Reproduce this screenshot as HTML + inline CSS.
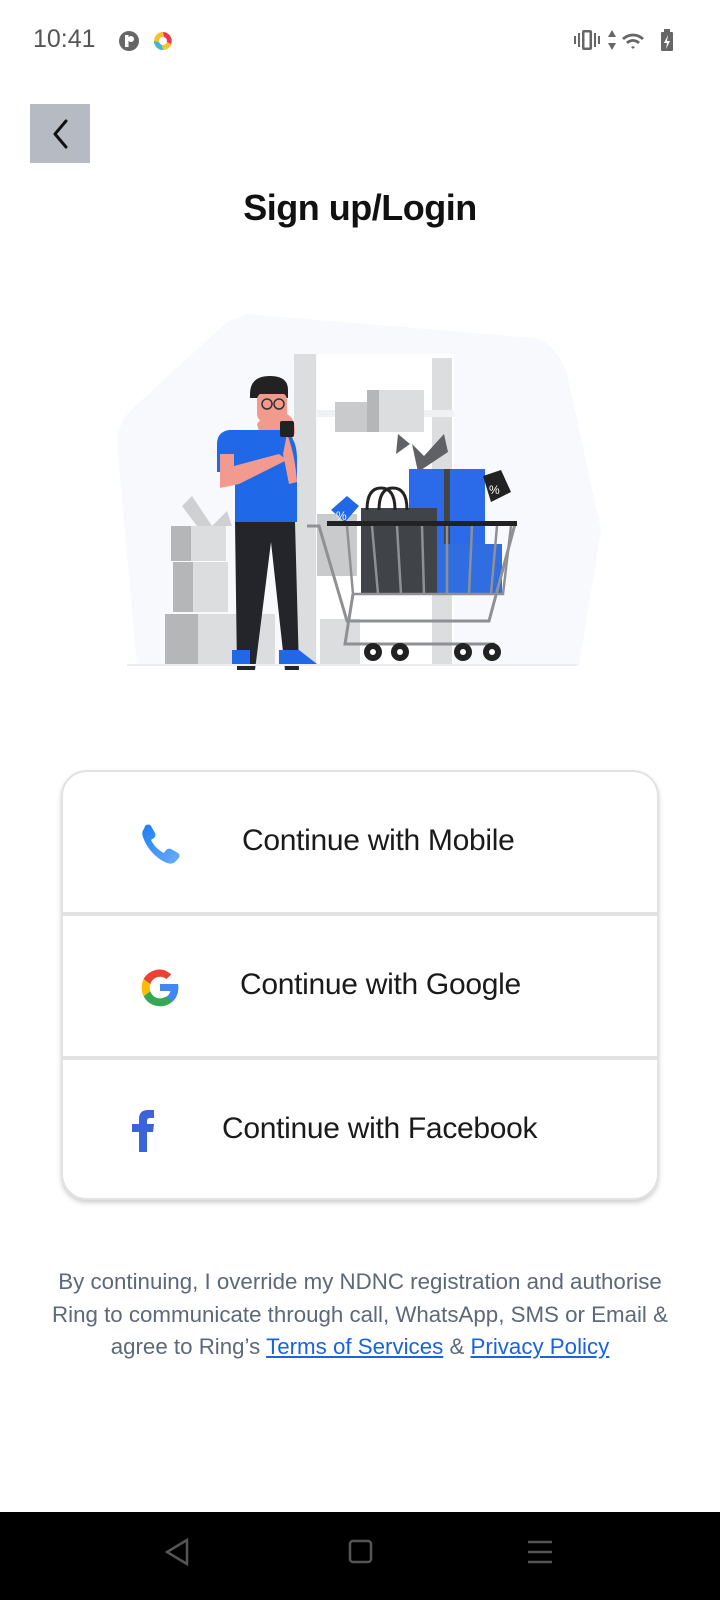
<!DOCTYPE html>
<html><head><meta charset="utf-8"><style>
*{margin:0;padding:0;box-sizing:border-box}
body{width:720px;height:1600px;background:#fff;position:relative;overflow:hidden;font-family:"Liberation Sans",sans-serif;color:#111}
.abs{position:absolute}
.time{left:33px;top:25px;font-size:25px;color:#555}
.back{left:30px;top:104px;width:60px;height:59px;background:#b6bac3}
.title{left:0;width:720px;top:187px;text-align:center;font-size:36px;font-weight:bold;letter-spacing:-0.5px}
.card{left:61px;top:770px;width:598px;height:430px;border:2px solid #e2e2e2;border-radius:26px;box-shadow:0 3px 5px rgba(0,0,0,.18);background:#fff;overflow:hidden}
.row{position:absolute;left:0;width:100%;height:142px}
.row span{position:absolute;font-size:30px;color:#1a1a1a;letter-spacing:-0.3px}
.div{position:absolute;left:0;width:100%;height:4px;background:#e2e2e2}
.disc{left:0;width:720px;top:1266px;text-align:center;font-size:22.3px;line-height:32.5px;color:#5d6878;white-space:nowrap}
.disc a{color:#1a63e0;text-decoration:underline}
.nav{left:0;top:1512px;width:720px;height:88px;background:#000}
</style></head><body>
<div class="abs time">10:41</div>
<svg class="abs" style="left:118px;top:30px" width="60" height="24" viewBox="0 0 60 24">
<circle cx="11" cy="11" r="10" fill="#666"/><rect x="7" y="5" width="3.5" height="12" fill="#fff"/><circle cx="13" cy="9" r="3" fill="#fff"/>
<circle cx="45" cy="11" r="9" fill="#f2c12e"/><path d="M45 2a9 9 0 0 1 8 12l-6-3z" fill="#e8365d"/><path d="M36 11a9 9 0 0 0 9 9l-2-7z" fill="#3ab8d8"/><circle cx="45" cy="11" r="4" fill="#fff"/>
</svg>
<svg class="abs" style="left:572px;top:26px" width="120" height="30" viewBox="0 0 120 30">
<g fill="#666"><rect x="2" y="10" width="2" height="8"/><rect x="6" y="7" width="2" height="14"/><rect x="10" y="4" width="10" height="20" rx="2"/><rect x="12.5" y="6.5" width="5" height="15" fill="#fff"/><rect x="22" y="7" width="2" height="14"/><rect x="26" y="10" width="2" height="8"/>
<path d="M40 4l-4 7h8zM40 24l-4-7h8z"/>
<path d="M50 12a16 16 0 0 1 22 0l-2 2a13 13 0 0 0-18 0zM54 16a10 10 0 0 1 14 0l-2 2a7 7 0 0 0-10 0zM59 21a3 3 0 0 1 4 0l-2 2z"/>
<rect x="89" y="6" width="12" height="19" rx="1"/><rect x="92" y="3" width="6" height="3"/></g>
<path d="M96 9l-4 8h3l-1 6 4-8h-3z" fill="#fff"/>
</svg>
<div class="abs back"><svg width="60" height="59"><path d="M36 17L25 30l11 13" stroke="#111" stroke-width="3" fill="none" stroke-linecap="round" stroke-linejoin="round"/></svg></div>
<div class="abs title">Sign up/Login</div>

<svg class="abs" style="left:117px;top:314px" width="490" height="366" viewBox="0 0 490 366">
<path d="M130 0L418 24Q440 30 450 60L484 216L462 352L20 352L0 130Q0 110 15 95L110 8Z" fill="#f7f9fd"/>
<rect x="177" y="40" width="22" height="312" fill="#dcdddf"/>
<rect x="200" y="40" width="137" height="312" fill="#fff"/>
<rect x="315" y="44" width="20" height="308" fill="#dcdddf"/>
<rect x="200" y="96" width="137" height="7" fill="#f0f1f3"/>
<rect x="218" y="88" width="40" height="30" fill="#c9cacc"/>
<rect x="250" y="76" width="57" height="42" fill="#dcdddf"/><rect x="250" y="76" width="12" height="42" fill="#b5b6b8"/>
<rect x="54" y="212" width="55" height="35" fill="#dcdddf"/><rect x="54" y="212" width="20" height="35" fill="#b5b6b8"/>
<rect x="56" y="248" width="55" height="50" fill="#dcdddf"/><rect x="56" y="248" width="20" height="50" fill="#b5b6b8"/>
<rect x="48" y="300" width="110" height="52" fill="#dcdddf"/><rect x="48" y="300" width="33" height="52" fill="#b5b6b8"/>
<path d="M80 212l-15-20 10-10 20 30zM95 212l15-15 5 15z" fill="#cfd0d2"/>
<rect x="200" y="200" width="40" height="62" fill="#c9cacc"/>
<rect x="203" y="305" width="40" height="45" fill="#dcdddf"/>
<path d="M140 110q10-14 30-10q8 4 8 18l-4 14h-28z" fill="#f39a8e"/>
<path d="M133 80q0-18 20-18q18 0 18 14v8h-38z" fill="#222"/>
<rect x="140" y="78" width="30" height="30" rx="8" fill="#f39a8e"/>
<path d="M142 70q12-8 28 2v8h-28z" fill="#222"/>
<circle cx="150" cy="90" r="5" fill="none" stroke="#333" stroke-width="1.5"/><circle cx="162" cy="90" r="5" fill="none" stroke="#333" stroke-width="1.5"/>
<path d="M100 130q0-12 12-14h50q18 2 18 30v62h-62v-50h-18z" fill="#1f68e8"/>
<path d="M103 140l14 0l0 12l45-12l8 6l-48 24l-19 4z" fill="#f39a8e"/>
<path d="M170 120q8 20 10 48l-8 2l-6-30z" fill="#f39a8e"/>
<rect x="163" y="107" width="14" height="16" rx="2" fill="#222"/>
<path d="M118 208h60l4 148h-14l-14-128l-16 128h-18z" fill="#23252a"/>
<path d="M115 336h18v14h-18zM162 336h20l18 14h-38z" fill="#1f68e8"/>
<path d="M295 130l12 12 20-22 4 18-30 20zM293 130l-12-10-2 20z" fill="#5f6165"/>
<rect x="292" y="155" width="76" height="76" fill="#2b6ae8"/>
<rect x="327" y="155" width="6" height="76" fill="#444"/>
<rect x="305" y="230" width="80" height="50" fill="#2f6de0"/>
<rect x="244" y="194" width="76" height="85" fill="#404348"/>
<path d="M250 196q0-22 14-22q14 0 14 22M262 196q0-22 14-22q14 0 14 22" stroke="#222" stroke-width="3" fill="none"/>
<path d="M366 162l18-6 10 22-20 10z" fill="#222"/>
<text x="372" y="180" font-size="12" fill="#fff" font-family="Liberation Sans">%</text>
<path d="M214 196l16-14 12 10-14 16z" fill="#1f68e8"/>
<text x="219" y="206" font-size="12" fill="#fff" font-family="Liberation Sans">%</text>
<path d="M190 212h12l28 95h142l26-97" stroke="#8f9094" stroke-width="3" fill="none"/>
<rect x="210" y="207" width="190" height="5" fill="#222"/>
<path d="M230 212l6 68h150l8-68M255 212l6 68M280 212l4 68M305 212l2 68M330 212l0 68M355 212l-3 68M380 212l-6 68" stroke="#8f9094" stroke-width="2.5" fill="none"/>
<path d="M236 280l-8 50h150" stroke="#8f9094" stroke-width="3" fill="none"/>
<g fill="#222"><circle cx="256" cy="338" r="9"/><circle cx="283" cy="338" r="9"/><circle cx="346" cy="338" r="9"/><circle cx="375" cy="338" r="9"/></g>
<g fill="#fff"><circle cx="256" cy="338" r="3"/><circle cx="283" cy="338" r="3"/><circle cx="346" cy="338" r="3"/><circle cx="375" cy="338" r="3"/></g>
<rect x="10" y="350" width="450" height="2" fill="#eceef2"/>
</svg>

<div class="abs card">
 <div class="row" style="top:0">
  <svg class="abs" style="left:78px;top:50px" width="42" height="42" viewBox="0 0 42 42"><defs><linearGradient id="pg" x1="0" y1="0" x2="1" y2="1"><stop offset="0" stop-color="#1a7ef0"/><stop offset="1" stop-color="#6aaefb"/></linearGradient></defs><path d="M4 4c2-2 5-2 6 0l4 7c1 2 0 4-1 5l-3 2c3 6 7 10 13 13l2-3c1-1 3-2 5-1l7 4c2 1 2 4 0 6l-3 3c-2 2-5 2-8 1C16 37 6 27 2 15c-1-3-1-6 1-8z" fill="url(#pg)"/></svg>
  <span style="left:179px;top:52px">Continue with Mobile</span>
 </div>
 <div class="div" style="top:140px"></div>
 <div class="row" style="top:144px">
  <svg class="abs" style="left:76px;top:50px" width="42" height="42" viewBox="0 0 48 48"><path fill="#4285F4" d="M45 24.5c0-1.6-.1-2.8-.4-4H24v8h11.8c-.5 3-2.4 5.3-5 6.9l7.4 5.5C42.5 37 45 31.3 45 24.5z"/><path fill="#34A853" d="M24 46c6 0 11-2 14.2-5.6l-7.4-5.5c-1.9 1.3-4.3 2.1-6.8 2.1-5.2 0-9.6-3.5-11.1-8.3l-7.6 5.9C8.8 41.6 15.9 46 24 46z"/><path fill="#FBBC05" d="M12.9 28.7c-.4-1.3-.6-2.6-.6-4s.2-2.8.6-4l-7.6-5.9C3.8 17.8 3 21.2 3 24.7s.8 6.9 2.3 9.9z"/><path fill="#EA4335" d="M24 12.3c3.3 0 5.9 1.4 7.3 2.7l5.5-5.3C33 6.3 29 4 24 4 15.9 4 8.8 8.4 5.3 14.8l7.6 5.9c1.5-4.8 5.9-8.4 11.1-8.4z"/></svg>
  <span style="left:177px;top:52px">Continue with Google</span>
 </div>
 <div class="div" style="top:284px"></div>
 <div class="row" style="top:288px">
  <svg class="abs" style="left:68px;top:50px" width="26" height="42" viewBox="0 0 26 42"><path d="M8 42V22H1v-8h7V9c0-6 3-9 9-9h6v8h-4c-2 0-3 1-3 3v3h7l-1 8h-6v20z" fill="#3b64d8"/></svg>
  <span style="left:159px;top:52px">Continue with Facebook</span>
 </div>
</div>

<div class="abs disc">By continuing, I override my NDNC registration and authorise<br>Ring to communicate through call, WhatsApp, SMS or Email &amp;<br>agree to Ring’s <a>Terms of Services</a> &amp; <a>Privacy Policy</a></div>

<div class="abs nav">
<svg width="720" height="88"><g stroke="#555" stroke-width="2.5" fill="none"><path d="M187 28l-20 12 20 12z"/><rect x="350" y="29" width="21" height="21" rx="3"/><path d="M528 30h24M528 40h24M528 50h24"/></g></svg>
</div>
</body></html>
